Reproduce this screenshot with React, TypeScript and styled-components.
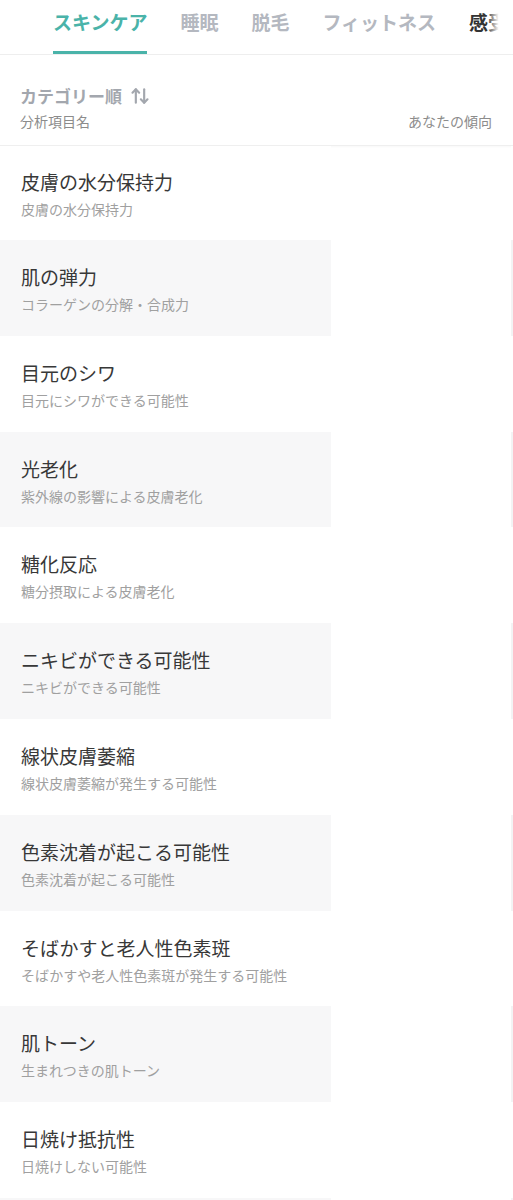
import React from 'react';
import styled, { createGlobalStyle } from 'styled-components';
import { ArrowUpDown } from 'lucide-react';

const GlobalStyle = createGlobalStyle`
  body {
    margin: 0;
    background: #fff;
    font-family: "Noto Sans CJK JP", "Noto Sans", sans-serif;
  }
`;

const Page = styled.div`
  width: 513px;
  background: #fff;
`;

// tab bar
const TabBar = styled.div`
  position: relative;
  display: flex;
  gap: 33px;
  padding-left: 53px;
  height: 54px;
  border-bottom: 1px solid #eeeeee;
  overflow: hidden;
  white-space: nowrap;
`;

const Tab = styled.div<{ $active?: boolean; $dark?: boolean }>`
  box-sizing: border-box;
  height: 54px;
  padding-top: 9px;
  font-size: 19px;
  font-weight: 700;
  line-height: 26px;
  color: ${(p) => (p.$active ? '#4ab3a9' : p.$dark ? '#333' : '#b4b8c0')};
  border-bottom: 3px solid ${(p) => (p.$active ? '#4ab3a9' : 'transparent')};
`;

const Fade = styled.div`
  position: absolute;
  right: 0;
  top: 0;
  width: 26px;
  height: 54px;
  background: linear-gradient(to right, rgba(255, 255, 255, 0), #fff 45%);
`;

// list header
const Header = styled.div`
  padding: 29px 21px 14px 20px;
  border-bottom: 1px solid #efefef;
  box-shadow: 0 1px 2px rgba(0, 0, 0, 0.03);
`;

const SortLabel = styled.div`
  display: flex;
  align-items: center;
  gap: 8px;
  font-size: 17px;
  font-weight: 700;
  line-height: 24px;
  color: #a3a7ae;
`;

const ColumnRow = styled.div`
  display: flex;
  justify-content: space-between;
  margin-top: 3px;
  font-size: 14px;
  line-height: 20px;
  color: #8c8c8c;
`;

// rows
const Row = styled.div<{ $first?: boolean }>`
  display: grid;
  grid-template-columns: 331px 1fr 2px;
  height: ${(p) => (p.$first ? '94px' : '95.8px')};
`;

const NameCell = styled.div<{ $shaded: boolean; $first?: boolean }>`
  box-sizing: border-box;
  padding: ${(p) => (p.$first ? '23px' : '24px')} 0 0 21px;
  background: ${(p) => (p.$shaded ? '#f7f7f8' : '#fff')};
`;

const Edge = styled.div<{ $shaded: boolean }>`
  background: ${(p) => (p.$shaded ? '#f3f3f4' : '#fff')};
`;

const Title = styled.div`
  font-size: 19px;
  line-height: 26px;
  color: #383838;
`;

const Sub = styled.div`
  margin-top: 4px;
  font-size: 14px;
  line-height: 20px;
  color: #a0a0a0;
`;

const items = [
  ['皮膚の水分保持力', '皮膚の水分保持力'],
  ['肌の弾力', 'コラーゲンの分解・合成力'],
  ['目元のシワ', '目元にシワができる可能性'],
  ['光老化', '紫外線の影響による皮膚老化'],
  ['糖化反応', '糖分摂取による皮膚老化'],
  ['ニキビができる可能性', 'ニキビができる可能性'],
  ['線状皮膚萎縮', '線状皮膚萎縮が発生する可能性'],
  ['色素沈着が起こる可能性', '色素沈着が起こる可能性'],
  ['そばかすと老人性色素斑', 'そばかすや老人性色素斑が発生する可能性'],
  ['肌トーン', '生まれつきの肌トーン'],
  ['日焼け抵抗性', '日焼けしない可能性'],
  ['', ''],
];

const App: React.FC = () => {
  return (
    <Page>
      <GlobalStyle />
      <TabBar>
        <Tab $active>スキンケア</Tab>
        <Tab>睡眠</Tab>
        <Tab>脱毛</Tab>
        <Tab>フィットネス</Tab>
        <Tab $dark>感受性</Tab>
        <Fade />
      </TabBar>

      <Header>
        <SortLabel>
          カテゴリー順
          <ArrowUpDown size={20} strokeWidth={2.6} color="#a3a7ae" />
        </SortLabel>
        <ColumnRow>
          <span>分析項目名</span>
          <span>あなたの傾向</span>
        </ColumnRow>
      </Header>

      {items.map(([title, sub], i) => {
        const shaded = i % 2 === 1;
        return (
          <Row key={i} $first={i === 0}>
            <NameCell $shaded={shaded} $first={i === 0}>
              <Title>{title}</Title>
              <Sub>{sub}</Sub>
            </NameCell>
            <div />
            <Edge $shaded={shaded} />
          </Row>
        );
      })}
    </Page>
  );
};

export default App;
